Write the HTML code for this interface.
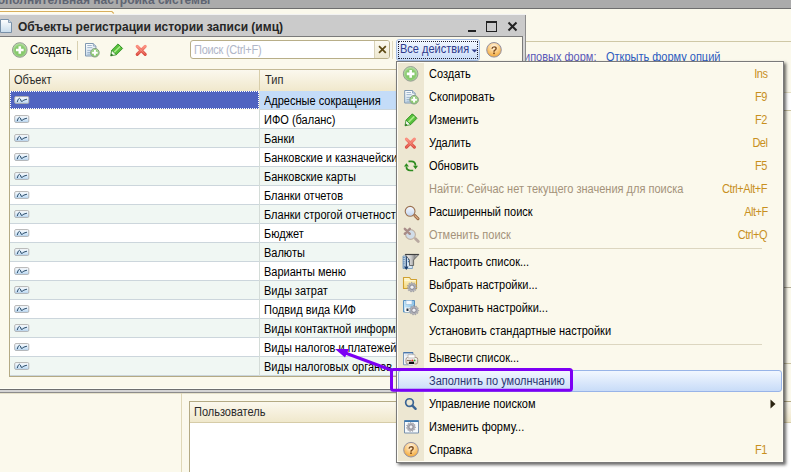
<!DOCTYPE html>
<html><head><meta charset="utf-8">
<style>
*{margin:0;padding:0;box-sizing:border-box}
html,body{width:791px;height:472px;overflow:hidden;background:#FBF9EC;font-family:"Liberation Sans",sans-serif;font-size:11px;color:#1a1a1a;position:relative}
.a{position:absolute;display:block}
.t{position:absolute;white-space:nowrap;line-height:14px}
</style></head><body>
<svg width="0" height="0" style="position:absolute"><defs>
<radialGradient id="gGreen" cx="0.5" cy="0.55" r="0.55"><stop offset="0" stop-color="#7CC060"/><stop offset="0.6" stop-color="#8ACB70"/><stop offset="1" stop-color="#C8E8B8"/></radialGradient>
<radialGradient id="gOrange" cx="0.5" cy="0.3" r="0.75"><stop offset="0" stop-color="#FFF8EC"/><stop offset="0.45" stop-color="#FCD08C"/><stop offset="1" stop-color="#F0A028"/></radialGradient>
<linearGradient id="gRed" x1="0" y1="0" x2="0" y2="1"><stop offset="0" stop-color="#FA8C7C"/><stop offset="1" stop-color="#DA4A3E"/></linearGradient>
<linearGradient id="gDoc" x1="0" y1="0" x2="0" y2="1"><stop offset="0" stop-color="#FFFFFF"/><stop offset="1" stop-color="#C8DCEC"/></linearGradient>
<linearGradient id="gLens" x1="0" y1="0" x2="0" y2="1"><stop offset="0" stop-color="#F8FAFF"/><stop offset="1" stop-color="#C0D4F0"/></linearGradient>
<linearGradient id="gFolder" x1="0" y1="0" x2="0" y2="1"><stop offset="0" stop-color="#FFF8D0"/><stop offset="1" stop-color="#F4D880"/></linearGradient>
<linearGradient id="gFloppy" x1="0" y1="0" x2="1" y2="0"><stop offset="0" stop-color="#C8E6F8"/><stop offset="1" stop-color="#8CC4E8"/></linearGradient>
<linearGradient id="gFunnel" x1="0" y1="0" x2="1" y2="0"><stop offset="0" stop-color="#FFFFFF"/><stop offset="0.45" stop-color="#C8C8C8"/><stop offset="0.7" stop-color="#8C8C8C"/><stop offset="1" stop-color="#F4F4F4"/></linearGradient>
<linearGradient id="gPrinter" x1="0" y1="0" x2="0" y2="1"><stop offset="0" stop-color="#FFFFFF"/><stop offset="1" stop-color="#D8CCC0"/></linearGradient>
<linearGradient id="gRowIcon" x1="0" y1="0" x2="0" y2="1"><stop offset="0" stop-color="#FFFFFF"/><stop offset="1" stop-color="#B8D8F4"/></linearGradient>
</defs></svg>
<div class="a" style="left:0;top:0;width:791px;height:8px;background:#ABABAB;overflow:hidden">
<div class="t" style="left:-11px;top:-7.46px;color:#5E6472;font-size:12px;font-weight:bold;">Дополнительная настройка системы</div>
</div>
<div class="a" style="left:0px;top:8px;width:791px;height:1px;background:#6E6E6E;"></div>
<div class="a" style="left:0px;top:9px;width:114px;height:6px;background:#FFFDF0;"></div>
<div class="a" style="left:0px;top:11px;width:112px;height:1px;background:#D8AE5C;"></div>
<svg class="a" style="left:111px;top:10px" width="4" height="5" viewBox="0 0 4 5"><path d="M0.5 1.2L2.8 3.5" stroke="#D8AE5C" stroke-width="1.2"/></svg>
<div class="a" style="left:526px;top:41px;width:265px;height:1px;background:#CFC8A6;"></div>
<div class="t" style="left:524px;top:50.14px;color:#5A58B8;font-size:12.0px;font-weight:normal;transform:scaleX(0.9167);transform-origin:0 0;">иповых форм:</div>
<div class="t" style="left:605.7px;top:50.14px;color:#2C5CC0;font-size:12.0px;font-weight:normal;transform:scaleX(0.9167);transform-origin:0 0;">Открыть форму опций</div>
<div class="a" style="left:784px;top:92px;width:7px;height:1px;background:#E4DEC4;"></div>
<div class="a" style="left:784px;top:93px;width:7px;height:17px;background:#FFFFFF;"></div>
<div class="a" style="left:784px;top:110px;width:7px;height:1px;background:#C8C0A0;"></div>
<div class="a" style="left:784px;top:287px;width:7px;height:1px;background:#B0AA98;"></div>
<div class="a" style="left:784px;top:363px;width:7px;height:1px;background:#C8C0A0;"></div>
<div class="a" style="left:0px;top:14px;width:526px;height:1px;background:#F2F2F2;"></div>
<div class="a" style="left:0px;top:15px;width:526px;height:21px;background:#CBCBCB;"></div>
<div class="a" style="left:0px;top:36px;width:523px;height:1px;background:#7A7A7A;"></div>
<div class="a" style="left:522px;top:36px;width:1px;height:353px;background:#7A7A7A;"></div>
<div class="a" style="left:523px;top:36px;width:2px;height:356px;background:#D4D4D4;"></div>
<div class="a" style="left:525px;top:15px;width:1px;height:378px;background:#8C8C8C;"></div>
<div class="a" style="left:0px;top:388px;width:522px;height:1px;background:#FFFFF6;"></div>
<div class="a" style="left:0px;top:389px;width:523px;height:1px;background:#6F6F6F;"></div>
<div class="a" style="left:0px;top:390px;width:525px;height:2px;background:#D4D4D4;"></div>
<div class="a" style="left:0px;top:392px;width:526px;height:1px;background:#8C8C8C;"></div>
<div class="a" style="left:0px;top:393px;width:526px;height:1px;background:#E6E2CA;"></div>
<svg class="a" style="left:0px;top:19px" width="13" height="14" viewBox="0 0 13 14"><path d="M0.5 0.5H8.5L11.5 3.5V13.5H0.5Z" fill="url(#gDoc)" stroke="#7890A8" stroke-width="1"/><path d="M8.5 0.5V3.5H11.5" fill="#C8D8E8" stroke="#7890A8" stroke-width="0.8"/></svg>
<div class="t" style="left:18px;top:19.70px;color:#262626;font-size:13px;font-weight:bold;transform:scaleX(0.925);transform-origin:0 0">Объекты регистрации истории записи (имц)</div>
<div class="a" style="left:468px;top:30px;width:8px;height:2px;background:#222222;"></div>
<div class="a" style="left:486px;top:21px;width:11px;height:11px;border:1px solid #222;border-top:2px solid #222"></div>
<svg class="a" style="left:507px;top:21px" width="11" height="11" viewBox="0 0 11 11"><path d="M1.5 1.5L9.5 9.5M9.5 1.5L1.5 9.5" stroke="#222" stroke-width="2"/></svg>
<div class="t" style="left:29.5px;top:42.84px;color:#000000;font-size:12.0px;font-weight:normal;transform:scaleX(0.9167);transform-origin:0 0;">Создать</div>
<div class="a" style="left:77px;top:41px;width:1px;height:19px;background:#D8D0B0;"></div>
<div class="a" style="left:190px;top:40px;width:200px;height:19px;border:1px solid #B8AE88;border-radius:3px;background:#FFFFFF"></div>
<div class="a" style="left:374px;top:41px;width:1px;height:17px;background:#D8D2B8;"></div>
<div class="a" style="left:375px;top:41px;width:14px;height:17px;background:linear-gradient(#FCFAF0,#EEE8D0);border-radius:0 2px 2px 0"></div>
<svg class="a" style="left:378px;top:45px" width="9" height="9" viewBox="0 0 9 9"><path d="M1 1.2L7.8 7.8M7.8 1.2L1 7.8" stroke="#5E4A14" stroke-width="1.7"/></svg>
<div class="t" style="left:193.5px;top:42.74px;color:#B0B6C8;font-size:12.0px;font-weight:normal;transform:scaleX(0.9167);transform-origin:0 0;letter-spacing:-0.3px">Поиск (Ctrl+F)</div>
<div class="a" style="left:392px;top:41px;width:1px;height:18px;background:#E0DAC0;"></div>
<div class="a" style="left:396px;top:39px;width:84px;height:22px;border:1px solid #A4BCE4;border-radius:3px;background:linear-gradient(#F4F8FF,#C8DCF8)"></div>
<div class="a" style="left:398px;top:41px;width:80px;height:18px;border:1px dotted #202030"></div>
<div class="t" style="left:399.5px;top:42.24px;color:#2E3A8C;font-size:12.0px;font-weight:normal;transform:scaleX(0.9167);transform-origin:0 0;">Все действия</div>
<svg class="a" style="left:471px;top:49px" width="7" height="4" viewBox="0 0 7 4"><path d="M0.5 0.5H6.5L3.5 3.5Z" fill="#2E3A8C"/></svg>
<div class="a" style="left:9px;top:69px;width:514px;height:1px;background:#C4BA96;"></div>
<div class="a" style="left:9px;top:69px;width:1px;height:308px;background:#B4AA84;"></div>
<div class="a" style="left:10px;top:70px;width:512px;height:21px;background:linear-gradient(#FBF8EE,#F0E8CC)"></div>
<div class="a" style="left:259px;top:70px;width:1px;height:20px;background:#D8CEAA;"></div>
<div class="t" style="left:14px;top:72.64px;color:#2a2a2a;font-size:12.0px;font-weight:normal;transform:scaleX(0.9167);transform-origin:0 0;">Объект</div>
<div class="t" style="left:264.5px;top:72.64px;color:#2a2a2a;font-size:12.0px;font-weight:normal;transform:scaleX(0.9167);transform-origin:0 0;">Тип</div>
<div class="a" style="left:10px;top:91px;width:249px;height:18px;background:#5064C0;"></div>
<div class="a" style="left:260px;top:91px;width:262px;height:18px;background:#C4DCF8;"></div>
<div class="a" style="left:10px;top:91px;width:249px;height:18px;border:1px dotted #FFFFFF"></div>
<div class="a" style="left:259px;top:109px;width:263px;height:1px;background:#CCD6DC;"></div>
<div class="a" style="left:259px;top:91px;width:1px;height:19px;background:#D4DCD8;"></div>
<div class="t" style="left:263.8px;top:94.04px;color:#000000;font-size:12.0px;font-weight:normal;transform:scaleX(0.9167);transform-origin:0 0;">Адресные сокращения</div>
<div class="a" style="left:10px;top:110px;width:512px;height:18px;background:#FFFFFF;"></div>
<div class="a" style="left:10px;top:128px;width:512px;height:1px;background:#CCD6DC;"></div>
<div class="a" style="left:259px;top:110px;width:1px;height:19px;background:#D4DCD8;"></div>
<div class="t" style="left:263.8px;top:113.04px;color:#000000;font-size:12.0px;font-weight:normal;transform:scaleX(0.9167);transform-origin:0 0;">ИФО (баланс)</div>
<div class="a" style="left:10px;top:129px;width:512px;height:18px;background:#F0F7F3;"></div>
<div class="a" style="left:10px;top:147px;width:512px;height:1px;background:#CCD6DC;"></div>
<div class="a" style="left:259px;top:129px;width:1px;height:19px;background:#D4DCD8;"></div>
<div class="t" style="left:263.8px;top:132.04px;color:#000000;font-size:12.0px;font-weight:normal;transform:scaleX(0.9167);transform-origin:0 0;">Банки</div>
<div class="a" style="left:10px;top:148px;width:512px;height:18px;background:#FFFFFF;"></div>
<div class="a" style="left:10px;top:166px;width:512px;height:1px;background:#CCD6DC;"></div>
<div class="a" style="left:259px;top:148px;width:1px;height:19px;background:#D4DCD8;"></div>
<div class="t" style="left:263.8px;top:151.04px;color:#000000;font-size:12.0px;font-weight:normal;transform:scaleX(0.9167);transform-origin:0 0;">Банковские и казначейские</div>
<div class="a" style="left:10px;top:167px;width:512px;height:18px;background:#F0F7F3;"></div>
<div class="a" style="left:10px;top:185px;width:512px;height:1px;background:#CCD6DC;"></div>
<div class="a" style="left:259px;top:167px;width:1px;height:19px;background:#D4DCD8;"></div>
<div class="t" style="left:263.8px;top:170.04px;color:#000000;font-size:12.0px;font-weight:normal;transform:scaleX(0.9167);transform-origin:0 0;">Банковские карты</div>
<div class="a" style="left:10px;top:186px;width:512px;height:18px;background:#FFFFFF;"></div>
<div class="a" style="left:10px;top:204px;width:512px;height:1px;background:#CCD6DC;"></div>
<div class="a" style="left:259px;top:186px;width:1px;height:19px;background:#D4DCD8;"></div>
<div class="t" style="left:263.8px;top:189.04px;color:#000000;font-size:12.0px;font-weight:normal;transform:scaleX(0.9167);transform-origin:0 0;">Бланки отчетов</div>
<div class="a" style="left:10px;top:205px;width:512px;height:18px;background:#F0F7F3;"></div>
<div class="a" style="left:10px;top:223px;width:512px;height:1px;background:#CCD6DC;"></div>
<div class="a" style="left:259px;top:205px;width:1px;height:19px;background:#D4DCD8;"></div>
<div class="t" style="left:263.8px;top:208.04px;color:#000000;font-size:12.0px;font-weight:normal;transform:scaleX(0.9167);transform-origin:0 0;">Бланки строгой отчетности</div>
<div class="a" style="left:10px;top:224px;width:512px;height:18px;background:#FFFFFF;"></div>
<div class="a" style="left:10px;top:242px;width:512px;height:1px;background:#CCD6DC;"></div>
<div class="a" style="left:259px;top:224px;width:1px;height:19px;background:#D4DCD8;"></div>
<div class="t" style="left:263.8px;top:227.04px;color:#000000;font-size:12.0px;font-weight:normal;transform:scaleX(0.9167);transform-origin:0 0;">Бюджет</div>
<div class="a" style="left:10px;top:243px;width:512px;height:18px;background:#F0F7F3;"></div>
<div class="a" style="left:10px;top:261px;width:512px;height:1px;background:#CCD6DC;"></div>
<div class="a" style="left:259px;top:243px;width:1px;height:19px;background:#D4DCD8;"></div>
<div class="t" style="left:263.8px;top:246.04px;color:#000000;font-size:12.0px;font-weight:normal;transform:scaleX(0.9167);transform-origin:0 0;">Валюты</div>
<div class="a" style="left:10px;top:262px;width:512px;height:18px;background:#FFFFFF;"></div>
<div class="a" style="left:10px;top:280px;width:512px;height:1px;background:#CCD6DC;"></div>
<div class="a" style="left:259px;top:262px;width:1px;height:19px;background:#D4DCD8;"></div>
<div class="t" style="left:263.8px;top:265.04px;color:#000000;font-size:12.0px;font-weight:normal;transform:scaleX(0.9167);transform-origin:0 0;">Варианты меню</div>
<div class="a" style="left:10px;top:281px;width:512px;height:18px;background:#F0F7F3;"></div>
<div class="a" style="left:10px;top:299px;width:512px;height:1px;background:#CCD6DC;"></div>
<div class="a" style="left:259px;top:281px;width:1px;height:19px;background:#D4DCD8;"></div>
<div class="t" style="left:263.8px;top:284.04px;color:#000000;font-size:12.0px;font-weight:normal;transform:scaleX(0.9167);transform-origin:0 0;">Виды затрат</div>
<div class="a" style="left:10px;top:300px;width:512px;height:18px;background:#FFFFFF;"></div>
<div class="a" style="left:10px;top:318px;width:512px;height:1px;background:#CCD6DC;"></div>
<div class="a" style="left:259px;top:300px;width:1px;height:19px;background:#D4DCD8;"></div>
<div class="t" style="left:263.8px;top:303.04px;color:#000000;font-size:12.0px;font-weight:normal;transform:scaleX(0.9167);transform-origin:0 0;">Подвид вида КИФ</div>
<div class="a" style="left:10px;top:319px;width:512px;height:18px;background:#F0F7F3;"></div>
<div class="a" style="left:10px;top:337px;width:512px;height:1px;background:#CCD6DC;"></div>
<div class="a" style="left:259px;top:319px;width:1px;height:19px;background:#D4DCD8;"></div>
<div class="t" style="left:263.8px;top:322.04px;color:#000000;font-size:12.0px;font-weight:normal;transform:scaleX(0.9167);transform-origin:0 0;">Виды контактной информации</div>
<div class="a" style="left:10px;top:338px;width:512px;height:18px;background:#FFFFFF;"></div>
<div class="a" style="left:10px;top:356px;width:512px;height:1px;background:#CCD6DC;"></div>
<div class="a" style="left:259px;top:338px;width:1px;height:19px;background:#D4DCD8;"></div>
<div class="t" style="left:263.8px;top:341.04px;color:#000000;font-size:12.0px;font-weight:normal;transform:scaleX(0.9167);transform-origin:0 0;">Виды налогов и платежей</div>
<div class="a" style="left:10px;top:357px;width:512px;height:18px;background:#F0F7F3;"></div>
<div class="a" style="left:10px;top:375px;width:512px;height:1px;background:#CCD6DC;"></div>
<div class="a" style="left:259px;top:357px;width:1px;height:19px;background:#D4DCD8;"></div>
<div class="t" style="left:263.8px;top:360.04px;color:#000000;font-size:12.0px;font-weight:normal;transform:scaleX(0.9167);transform-origin:0 0;">Виды налоговых органов</div>
<div class="a" style="left:9px;top:376px;width:514px;height:1px;background:#B4AA84;"></div>
<svg class="a" style="left:0;top:0" width="791" height="472" viewBox="0 0 791 472"><g transform="translate(11,91)"><rect x="3.7" y="5.6" width="14.1" height="6.8" rx="1.2" fill="url(#gRowIcon)" stroke="#ABABAB" stroke-width="0.9"/><path d="M6.3 10.7Q7.2 7.2 8.5 7.3Q9.4 7.4 10.2 10.3Q10.8 10.9 12.9 9.1L15.6 8.3" fill="none" stroke="#284A68" stroke-width="1.0" stroke-linecap="round"/></g><g transform="translate(11,110)"><rect x="3.7" y="5.6" width="14.1" height="6.8" rx="1.2" fill="url(#gRowIcon)" stroke="#ABABAB" stroke-width="0.9"/><path d="M6.3 10.7Q7.2 7.2 8.5 7.3Q9.4 7.4 10.2 10.3Q10.8 10.9 12.9 9.1L15.6 8.3" fill="none" stroke="#284A68" stroke-width="1.0" stroke-linecap="round"/></g><g transform="translate(11,129)"><rect x="3.7" y="5.6" width="14.1" height="6.8" rx="1.2" fill="url(#gRowIcon)" stroke="#ABABAB" stroke-width="0.9"/><path d="M6.3 10.7Q7.2 7.2 8.5 7.3Q9.4 7.4 10.2 10.3Q10.8 10.9 12.9 9.1L15.6 8.3" fill="none" stroke="#284A68" stroke-width="1.0" stroke-linecap="round"/></g><g transform="translate(11,148)"><rect x="3.7" y="5.6" width="14.1" height="6.8" rx="1.2" fill="url(#gRowIcon)" stroke="#ABABAB" stroke-width="0.9"/><path d="M6.3 10.7Q7.2 7.2 8.5 7.3Q9.4 7.4 10.2 10.3Q10.8 10.9 12.9 9.1L15.6 8.3" fill="none" stroke="#284A68" stroke-width="1.0" stroke-linecap="round"/></g><g transform="translate(11,167)"><rect x="3.7" y="5.6" width="14.1" height="6.8" rx="1.2" fill="url(#gRowIcon)" stroke="#ABABAB" stroke-width="0.9"/><path d="M6.3 10.7Q7.2 7.2 8.5 7.3Q9.4 7.4 10.2 10.3Q10.8 10.9 12.9 9.1L15.6 8.3" fill="none" stroke="#284A68" stroke-width="1.0" stroke-linecap="round"/></g><g transform="translate(11,186)"><rect x="3.7" y="5.6" width="14.1" height="6.8" rx="1.2" fill="url(#gRowIcon)" stroke="#ABABAB" stroke-width="0.9"/><path d="M6.3 10.7Q7.2 7.2 8.5 7.3Q9.4 7.4 10.2 10.3Q10.8 10.9 12.9 9.1L15.6 8.3" fill="none" stroke="#284A68" stroke-width="1.0" stroke-linecap="round"/></g><g transform="translate(11,205)"><rect x="3.7" y="5.6" width="14.1" height="6.8" rx="1.2" fill="url(#gRowIcon)" stroke="#ABABAB" stroke-width="0.9"/><path d="M6.3 10.7Q7.2 7.2 8.5 7.3Q9.4 7.4 10.2 10.3Q10.8 10.9 12.9 9.1L15.6 8.3" fill="none" stroke="#284A68" stroke-width="1.0" stroke-linecap="round"/></g><g transform="translate(11,224)"><rect x="3.7" y="5.6" width="14.1" height="6.8" rx="1.2" fill="url(#gRowIcon)" stroke="#ABABAB" stroke-width="0.9"/><path d="M6.3 10.7Q7.2 7.2 8.5 7.3Q9.4 7.4 10.2 10.3Q10.8 10.9 12.9 9.1L15.6 8.3" fill="none" stroke="#284A68" stroke-width="1.0" stroke-linecap="round"/></g><g transform="translate(11,243)"><rect x="3.7" y="5.6" width="14.1" height="6.8" rx="1.2" fill="url(#gRowIcon)" stroke="#ABABAB" stroke-width="0.9"/><path d="M6.3 10.7Q7.2 7.2 8.5 7.3Q9.4 7.4 10.2 10.3Q10.8 10.9 12.9 9.1L15.6 8.3" fill="none" stroke="#284A68" stroke-width="1.0" stroke-linecap="round"/></g><g transform="translate(11,262)"><rect x="3.7" y="5.6" width="14.1" height="6.8" rx="1.2" fill="url(#gRowIcon)" stroke="#ABABAB" stroke-width="0.9"/><path d="M6.3 10.7Q7.2 7.2 8.5 7.3Q9.4 7.4 10.2 10.3Q10.8 10.9 12.9 9.1L15.6 8.3" fill="none" stroke="#284A68" stroke-width="1.0" stroke-linecap="round"/></g><g transform="translate(11,281)"><rect x="3.7" y="5.6" width="14.1" height="6.8" rx="1.2" fill="url(#gRowIcon)" stroke="#ABABAB" stroke-width="0.9"/><path d="M6.3 10.7Q7.2 7.2 8.5 7.3Q9.4 7.4 10.2 10.3Q10.8 10.9 12.9 9.1L15.6 8.3" fill="none" stroke="#284A68" stroke-width="1.0" stroke-linecap="round"/></g><g transform="translate(11,300)"><rect x="3.7" y="5.6" width="14.1" height="6.8" rx="1.2" fill="url(#gRowIcon)" stroke="#ABABAB" stroke-width="0.9"/><path d="M6.3 10.7Q7.2 7.2 8.5 7.3Q9.4 7.4 10.2 10.3Q10.8 10.9 12.9 9.1L15.6 8.3" fill="none" stroke="#284A68" stroke-width="1.0" stroke-linecap="round"/></g><g transform="translate(11,319)"><rect x="3.7" y="5.6" width="14.1" height="6.8" rx="1.2" fill="url(#gRowIcon)" stroke="#ABABAB" stroke-width="0.9"/><path d="M6.3 10.7Q7.2 7.2 8.5 7.3Q9.4 7.4 10.2 10.3Q10.8 10.9 12.9 9.1L15.6 8.3" fill="none" stroke="#284A68" stroke-width="1.0" stroke-linecap="round"/></g><g transform="translate(11,338)"><rect x="3.7" y="5.6" width="14.1" height="6.8" rx="1.2" fill="url(#gRowIcon)" stroke="#ABABAB" stroke-width="0.9"/><path d="M6.3 10.7Q7.2 7.2 8.5 7.3Q9.4 7.4 10.2 10.3Q10.8 10.9 12.9 9.1L15.6 8.3" fill="none" stroke="#284A68" stroke-width="1.0" stroke-linecap="round"/></g><g transform="translate(11,357)"><rect x="3.7" y="5.6" width="14.1" height="6.8" rx="1.2" fill="url(#gRowIcon)" stroke="#ABABAB" stroke-width="0.9"/><path d="M6.3 10.7Q7.2 7.2 8.5 7.3Q9.4 7.4 10.2 10.3Q10.8 10.9 12.9 9.1L15.6 8.3" fill="none" stroke="#284A68" stroke-width="1.0" stroke-linecap="round"/></g></svg>
<svg class="a" style="left:0;top:0" width="791" height="472" viewBox="0 0 791 472"><g transform="translate(10.15,40.15)"><circle cx="9.65" cy="9.85" r="7.3" fill="url(#gGreen)" stroke="#949C92" stroke-width="1"/><path d="M5.8 9.85H13.5M9.65 6V13.7" stroke="#FFFFFF" stroke-width="2.6"/></g><g transform="translate(81.8,40)"><path d="M3.7 3.5H11.5L14.1 6.1V16H3.7Z" fill="url(#gDoc)" stroke="#8098B0" stroke-width="1"/><path d="M11.5 3.5V6.1H14.1" fill="#D0DCE8" stroke="#8098B0" stroke-width="0.8"/><path d="M5.5 5.5H10M5.5 7.6H10.5M5.5 10.4H9M5.5 12.5H9M5.5 14.2H9" stroke="#98B0C8" stroke-width="0.9"/><circle cx="13.1" cy="12.7" r="4.3" fill="url(#gGreen)" stroke="#7C9478" stroke-width="0.9"/><path d="M10.3 12.7H15.9M13.1 9.9V15.5" stroke="#FFFFFF" stroke-width="2"/></g><g transform="translate(107.7,40.1)"><path d="M10.3 3.8L14.9 8.4L8.6 14.7L4 10.1Z" fill="#58C03C" stroke="#2A8A1C" stroke-width="0.8" stroke-linejoin="round"/><path d="M6.3 12.4L12.6 6.1" stroke="#A8EC88" stroke-width="1.6"/><path d="M10.8 4.3L14.4 7.9" stroke="#2A8A1C" stroke-width="0.8"/><path d="M4 10.1L8.6 14.7L3 15.8Z" fill="#F4F8F0" stroke="#2A8A1C" stroke-width="0.8" stroke-linejoin="round"/><path d="M3 15.8L3.8 13.4L5.4 15Z" fill="#1A6010"/></g><g transform="translate(132.8,41.1)"><path d="M4.4 5.2L12.4 13.2M12.4 5.2L4.4 13.2" stroke="url(#gRed)" stroke-width="3.1" stroke-linecap="round"/><path d="M4.4 5.2L12.4 13.2M12.4 5.2L4.4 13.2" stroke="#FFB0A0" stroke-width="0.7" stroke-linecap="round" stroke-opacity="0.6"/></g><g transform="translate(480,40)"><circle cx="14" cy="9.8" r="7.3" fill="url(#gOrange)" stroke="#9490A0" stroke-width="1"/><path d="M12.03 8.74Q12.20 6.86 14.16 6.86Q16.13 6.86 16.13 8.50Q16.13 9.56 14.66 10.38Q14.00 10.79 14.00 11.86" fill="none" stroke="#7A4A1E" stroke-width="1.45"/><rect x="13.15" y="12.51" width="1.7" height="1.6" fill="#7A4A1E"/></g></svg>
<div class="a" style="left:181px;top:393px;width:1px;height:79px;background:#E0D8B8;"></div>
<div class="a" style="left:189px;top:401px;width:602px;height:1px;background:#B4AA84;"></div>
<div class="a" style="left:189px;top:401px;width:1px;height:71px;background:#B4AA84;"></div>
<div class="a" style="left:190px;top:402px;width:601px;height:20px;background:linear-gradient(#FBF8EE,#F0E8CC)"></div>
<div class="a" style="left:190px;top:422px;width:601px;height:1px;background:#D6CCA8;"></div>
<div class="a" style="left:190px;top:423px;width:601px;height:49px;background:#FFFFFF;"></div>
<div class="t" style="left:194px;top:404.84px;color:#2a2a2a;font-size:12.0px;font-weight:normal;transform:scaleX(0.9167);transform-origin:0 0;">Пользователь</div>
<div class="a" style="left:396px;top:61px;width:388px;height:402px;box-shadow:2px 2px 3px 0px rgba(0,0,0,0.6)"></div>
<div class="a" style="left:396px;top:61px;width:388px;height:402px;border:1px solid #7A7A7A;background:#FBF9EC"></div>
<div class="a" style="left:397px;top:62px;width:386px;height:400px;border:1px solid #FFFDF4"></div>
<div class="a" style="left:398px;top:63px;width:26px;height:398px;background:#EDE7D2;"></div>
<div class="t" style="left:429px;top:66.84px;color:#000000;font-size:12.0px;font-weight:normal;transform:scaleX(0.9167);transform-origin:0 0;">Создать</div>
<div class="t" style="right:23.5px;top:66.84px;color:#C8901E;font-size:12.0px;letter-spacing:-0.5px;transform:scaleX(0.9167);transform-origin:100% 0">Ins</div>
<div class="t" style="left:429px;top:89.84px;color:#000000;font-size:12.0px;font-weight:normal;transform:scaleX(0.9167);transform-origin:0 0;">Скопировать</div>
<div class="t" style="right:23.5px;top:89.84px;color:#C8901E;font-size:12.0px;letter-spacing:-0.5px;transform:scaleX(0.9167);transform-origin:100% 0">F9</div>
<div class="t" style="left:429px;top:112.84px;color:#000000;font-size:12.0px;font-weight:normal;transform:scaleX(0.9167);transform-origin:0 0;">Изменить</div>
<div class="t" style="right:23.5px;top:112.84px;color:#C8901E;font-size:12.0px;letter-spacing:-0.5px;transform:scaleX(0.9167);transform-origin:100% 0">F2</div>
<div class="t" style="left:429px;top:135.84px;color:#000000;font-size:12.0px;font-weight:normal;transform:scaleX(0.9167);transform-origin:0 0;">Удалить</div>
<div class="t" style="right:23.5px;top:135.84px;color:#C8901E;font-size:12.0px;letter-spacing:-0.5px;transform:scaleX(0.9167);transform-origin:100% 0">Del</div>
<div class="t" style="left:429px;top:158.84px;color:#000000;font-size:12.0px;font-weight:normal;transform:scaleX(0.9167);transform-origin:0 0;">Обновить</div>
<div class="t" style="right:23.5px;top:158.84px;color:#C8901E;font-size:12.0px;letter-spacing:-0.5px;transform:scaleX(0.9167);transform-origin:100% 0">F5</div>
<div class="t" style="left:429px;top:181.84px;color:#A4927A;font-size:12.0px;font-weight:normal;transform:scaleX(0.9167);transform-origin:0 0;">Найти: Сейчас нет текущего значения для поиска</div>
<div class="t" style="right:23.5px;top:181.84px;color:#C8901E;font-size:12.0px;letter-spacing:-0.5px;transform:scaleX(0.9167);transform-origin:100% 0">Ctrl+Alt+F</div>
<div class="t" style="left:429px;top:204.84px;color:#000000;font-size:12.0px;font-weight:normal;transform:scaleX(0.9167);transform-origin:0 0;">Расширенный поиск</div>
<div class="t" style="right:23.5px;top:204.84px;color:#C8901E;font-size:12.0px;letter-spacing:-0.5px;transform:scaleX(0.9167);transform-origin:100% 0">Alt+F</div>
<div class="t" style="left:429px;top:227.84px;color:#A4927A;font-size:12.0px;font-weight:normal;transform:scaleX(0.9167);transform-origin:0 0;">Отменить поиск</div>
<div class="t" style="right:23.5px;top:227.84px;color:#C8901E;font-size:12.0px;letter-spacing:-0.5px;transform:scaleX(0.9167);transform-origin:100% 0">Ctrl+Q</div>
<div class="a" style="left:429px;top:248px;width:333px;height:1px;background:#DCD6C0;"></div>
<div class="t" style="left:429px;top:254.84px;color:#000000;font-size:12.0px;font-weight:normal;transform:scaleX(0.9167);transform-origin:0 0;">Настроить список...</div>
<div class="t" style="left:429px;top:277.84px;color:#000000;font-size:12.0px;font-weight:normal;transform:scaleX(0.9167);transform-origin:0 0;">Выбрать настройки...</div>
<div class="t" style="left:429px;top:300.84px;color:#000000;font-size:12.0px;font-weight:normal;transform:scaleX(0.9167);transform-origin:0 0;">Сохранить настройки...</div>
<div class="t" style="left:429px;top:323.84px;color:#000000;font-size:12.0px;font-weight:normal;transform:scaleX(0.9167);transform-origin:0 0;">Установить стандартные настройки</div>
<div class="a" style="left:429px;top:344px;width:333px;height:1px;background:#DCD6C0;"></div>
<div class="t" style="left:429px;top:350.84px;color:#000000;font-size:12.0px;font-weight:normal;transform:scaleX(0.9167);transform-origin:0 0;">Вывести список...</div>
<div class="a" style="left:398px;top:370px;width:384px;height:22px;border:1px solid #98B4E8;border-radius:3px;background:linear-gradient(#F2F7FF,#C8DCF8)"></div>
<div class="t" style="left:429px;top:373.84px;color:#2A3470;font-size:12.0px;font-weight:normal;transform:scaleX(0.9167);transform-origin:0 0;">Заполнить по умолнчанию</div>
<div class="t" style="left:429px;top:396.84px;color:#000000;font-size:12.0px;font-weight:normal;transform:scaleX(0.9167);transform-origin:0 0;">Управление поиском</div>
<svg class="a" style="left:770px;top:399px" width="6" height="10" viewBox="0 0 6 10"><path d="M0.5 0.5L5.5 5L0.5 9.5Z" fill="#2A2410"/></svg>
<div class="t" style="left:429px;top:419.84px;color:#000000;font-size:12.0px;font-weight:normal;transform:scaleX(0.9167);transform-origin:0 0;">Изменить форму...</div>
<div class="t" style="left:429px;top:442.84px;color:#000000;font-size:12.0px;font-weight:normal;transform:scaleX(0.9167);transform-origin:0 0;">Справка</div>
<div class="t" style="right:23.5px;top:442.84px;color:#C8901E;font-size:12.0px;letter-spacing:-0.5px;transform:scaleX(0.9167);transform-origin:100% 0">F1</div>
<svg class="a" style="left:0;top:0" width="791" height="472" viewBox="0 0 791 472"><g transform="translate(401,64)"><circle cx="9.65" cy="9.85" r="7.3" fill="url(#gGreen)" stroke="#949C92" stroke-width="1"/><path d="M5.8 9.85H13.5M9.65 6V13.7" stroke="#FFFFFF" stroke-width="2.6"/></g><g transform="translate(401,87)"><path d="M3.7 3.5H11.5L14.1 6.1V16H3.7Z" fill="url(#gDoc)" stroke="#8098B0" stroke-width="1"/><path d="M11.5 3.5V6.1H14.1" fill="#D0DCE8" stroke="#8098B0" stroke-width="0.8"/><path d="M5.5 5.5H10M5.5 7.6H10.5M5.5 10.4H9M5.5 12.5H9M5.5 14.2H9" stroke="#98B0C8" stroke-width="0.9"/><circle cx="13.1" cy="12.7" r="4.3" fill="url(#gGreen)" stroke="#7C9478" stroke-width="0.9"/><path d="M10.3 12.7H15.9M13.1 9.9V15.5" stroke="#FFFFFF" stroke-width="2"/></g><g transform="translate(402,110)"><path d="M10.3 3.8L14.9 8.4L8.6 14.7L4 10.1Z" fill="#58C03C" stroke="#2A8A1C" stroke-width="0.8" stroke-linejoin="round"/><path d="M6.3 12.4L12.6 6.1" stroke="#A8EC88" stroke-width="1.6"/><path d="M10.8 4.3L14.4 7.9" stroke="#2A8A1C" stroke-width="0.8"/><path d="M4 10.1L8.6 14.7L3 15.8Z" fill="#F4F8F0" stroke="#2A8A1C" stroke-width="0.8" stroke-linejoin="round"/><path d="M3 15.8L3.8 13.4L5.4 15Z" fill="#1A6010"/></g><g transform="translate(402,134)"><path d="M4.4 5.2L12.4 13.2M12.4 5.2L4.4 13.2" stroke="url(#gRed)" stroke-width="3.1" stroke-linecap="round"/><path d="M4.4 5.2L12.4 13.2M12.4 5.2L4.4 13.2" stroke="#FFB0A0" stroke-width="0.7" stroke-linecap="round" stroke-opacity="0.6"/></g><g transform="translate(402,157)"><path d="M6.5 4.4H9.4Q13.3 4.4 13.5 8.6" fill="none" stroke="#2E8C20" stroke-width="1.7"/><path d="M11 8.8H16L13.5 12.2Z" fill="#2E8C20"/><path d="M11.2 13.5H8.2Q4.4 13.5 4.4 9.6" fill="none" stroke="#2E8C20" stroke-width="1.7"/><path d="M1.9 9.6H6.9L4.4 6.2Z" fill="#2E8C20"/></g><g transform="translate(401,203)"><path d="M14 12.7L17 15.7" stroke="#8A5A38" stroke-width="3" stroke-linecap="round"/><path d="M14 12.7L17 15.7" stroke="#D8A880" stroke-width="1.4" stroke-linecap="round"/><circle cx="9.1" cy="8.3" r="4.9" fill="url(#gLens)" stroke="#9A7050" stroke-width="1.1"/></g><g transform="translate(401,226)"><path d="M14.5 12.8L17.3 15.6" stroke="#B8A8A0" stroke-width="2.8" stroke-linecap="round"/><circle cx="9.5" cy="8.5" r="4.9" fill="#D0DCE8" stroke="#C0B0A0" stroke-width="1.1"/><path d="M3.8 2.8L8.8 7.8M8.8 2.8L3.8 7.8" stroke="#A88C88" stroke-width="2.4" stroke-linecap="round"/></g><g transform="translate(401,251)"><path d="M2 5H11.4V17.5H2Z" fill="#D8E8F4" stroke="#6890B8" stroke-width="0.8"/><path d="M3 6V17M7.5 8V12" stroke="#3C6CA0" stroke-width="1.2" stroke-dasharray="1.2 0.9"/><path d="M5.3 5V17.5M3.6 15.5L5.3 18L7 15.5" fill="none" stroke="#1C3C68" stroke-width="1.2"/><path d="M4.2 3.5H17.8L12.6 9V14.5H8.5V9Z" fill="url(#gFunnel)" stroke="#505050" stroke-width="0.8" stroke-linejoin="round"/><path d="M4.2 3.5H17.8" stroke="#404040" stroke-width="1.2"/></g><g transform="translate(401,274)"><path d="M2.5 3.5H8.5L10 5.5H15.5V14.5H2.5Z" fill="url(#gFolder)" stroke="#D0A030" stroke-width="1.1" stroke-linejoin="round"/><path d="M3.5 6.5H14.5" stroke="#FFFBE0" stroke-width="0.8"/><polygon points="15.90,13.20 15.85,13.90 14.57,14.25 14.39,14.75 15.12,15.85 14.70,16.41 13.44,16.01 13.01,16.33 13.04,17.66 12.38,17.90 11.53,16.89 11.00,16.92 10.30,18.05 9.62,17.90 9.45,16.59 8.99,16.33 7.79,16.90 7.30,16.41 7.87,15.21 7.61,14.75 6.30,14.58 6.15,13.90 7.28,13.20 7.31,12.67 6.30,11.82 6.54,11.16 7.87,11.19 8.19,10.76 7.79,9.50 8.35,9.08 9.45,9.81 9.95,9.63 10.30,8.35 11.00,8.30 11.53,9.51 12.05,9.63 13.04,8.74 13.65,9.08 13.44,10.39 13.81,10.76 15.12,10.55 15.46,11.16 14.57,12.15 14.69,12.67" fill="#B4B4BC" stroke="#8C8C94" stroke-width="0.5"/><circle cx="11" cy="13.2" r="2.35" fill="none" stroke="#8C8C96" stroke-width="0.9"/><circle cx="11" cy="13.2" r="1.47" fill="#F0F0F4"/></g><g transform="translate(401,297)"><path d="M2.5 3.5H13.5V15H2.5Z" fill="url(#gFloppy)" stroke="#5A90C0" stroke-width="1"/><path d="M5 3.5H11V7.5H5Z" fill="#F4F8FC" stroke="#90B8D8" stroke-width="0.6"/><path d="M4 10.5H9V15H4Z" fill="#F8F8F8"/><path d="M5.5 11.5H7.5V14H5.5Z" fill="#203040"/><polygon points="17.80,13.30 17.75,13.98 16.50,14.33 16.32,14.82 17.04,15.90 16.63,16.44 15.39,16.06 14.97,16.37 14.99,17.67 14.35,17.91 13.52,16.91 13.00,16.95 12.32,18.05 11.65,17.91 11.48,16.62 11.03,16.37 9.86,16.93 9.37,16.44 9.93,15.27 9.68,14.82 8.39,14.65 8.25,13.98 9.35,13.30 9.39,12.78 8.39,11.95 8.63,11.31 9.93,11.33 10.24,10.91 9.86,9.67 10.40,9.26 11.48,9.98 11.97,9.80 12.32,8.55 13.00,8.50 13.52,9.69 14.03,9.80 14.99,8.93 15.60,9.26 15.39,10.54 15.76,10.91 17.04,10.70 17.37,11.31 16.50,12.27 16.61,12.78" fill="#B4B4BC" stroke="#8C8C94" stroke-width="0.5"/><circle cx="13" cy="13.3" r="2.30" fill="none" stroke="#8C8C96" stroke-width="0.9"/><circle cx="13" cy="13.3" r="1.44" fill="#F0F0F4"/></g><g transform="translate(401,349)"><path d="M2.5 3.5H12V15.8H2.5Z" fill="#F0F4F8" stroke="#7C98B8" stroke-width="1"/><path d="M2.5 3.8H12" stroke="#4070A8" stroke-width="1.2"/><path d="M4 6H10.5" stroke="#C8D4E4" stroke-width="0.8"/><rect x="5" y="8.5" width="11.7" height="6.5" rx="1.8" fill="url(#gPrinter)" stroke="#9C8A7C" stroke-width="0.9"/><path d="M7 5.7H14V9H7Z" fill="#FFFFFF" stroke="#B0A8A0" stroke-width="0.7"/><path d="M6 11.4H10.3" stroke="#8A6A50" stroke-width="1"/><circle cx="11.4" cy="11.4" r="0.95" fill="#E82818"/><circle cx="13.6" cy="11.4" r="0.95" fill="#28B028"/><path d="M8 12.7H13V15H8Z" fill="#101010"/><path d="M7.5 15.6H13.5" stroke="#F0F0F0" stroke-width="1"/></g><g transform="translate(401,395)"><circle cx="8.5" cy="7.6" r="3.85" fill="none" stroke="#3A6494" stroke-width="1.7"/><path d="M11.4 10.6L14.6 13.8" stroke="#3A6494" stroke-width="2.4" stroke-linecap="round"/></g><g transform="translate(401,416)"><path d="M3.5 4.5H17.5V17H3.5Z" fill="#F6FAFE" stroke="#7890AC" stroke-width="1"/><path d="M3.5 5.2H17.5" stroke="#3A78B0" stroke-width="1.6"/><polygon points="14.60,11.00 14.55,11.65 13.35,11.98 13.18,12.45 13.87,13.49 13.48,14.01 12.29,13.64 11.89,13.94 11.91,15.18 11.30,15.41 10.50,14.46 10.00,14.50 9.35,15.55 8.70,15.41 8.55,14.18 8.11,13.94 6.99,14.48 6.52,14.01 7.06,12.89 6.82,12.45 5.59,12.30 5.45,11.65 6.50,11.00 6.54,10.50 5.59,9.70 5.82,9.09 7.06,9.11 7.36,8.71 6.99,7.52 7.51,7.13 8.55,7.82 9.02,7.65 9.35,6.45 10.00,6.40 10.50,7.54 10.98,7.65 11.91,6.82 12.49,7.13 12.29,8.36 12.64,8.71 13.87,8.51 14.18,9.09 13.35,10.02 13.46,10.50" fill="#B4B4BC" stroke="#8C8C94" stroke-width="0.5"/><circle cx="10" cy="11" r="2.21" fill="none" stroke="#8C8C96" stroke-width="0.9"/><circle cx="10" cy="11" r="1.38" fill="#F0F0F4"/></g><g transform="translate(401,440)"><circle cx="10" cy="9.7" r="7.3" fill="url(#gOrange)" stroke="#9490A0" stroke-width="1"/><path d="M8.03 8.64Q8.20 6.76 10.16 6.76Q12.13 6.76 12.13 8.40Q12.13 9.46 10.66 10.28Q10.00 10.69 10.00 11.76" fill="none" stroke="#7A4A1E" stroke-width="1.45"/><rect x="9.15" y="12.41" width="1.7" height="1.6" fill="#7A4A1E"/></g></svg>
<svg class="a" style="left:0;top:0" width="791" height="472" viewBox="0 0 791 472"><rect x="391.5" y="369.5" width="180" height="20.8" rx="2" fill="none" stroke="#7D00F4" stroke-width="3"/><path d="M391 370L344 352.5" stroke="#7D00F4" stroke-width="3"/><path d="M335 349L349 349L345 357.5Z" fill="#7D00F4"/></svg>
</body></html>
